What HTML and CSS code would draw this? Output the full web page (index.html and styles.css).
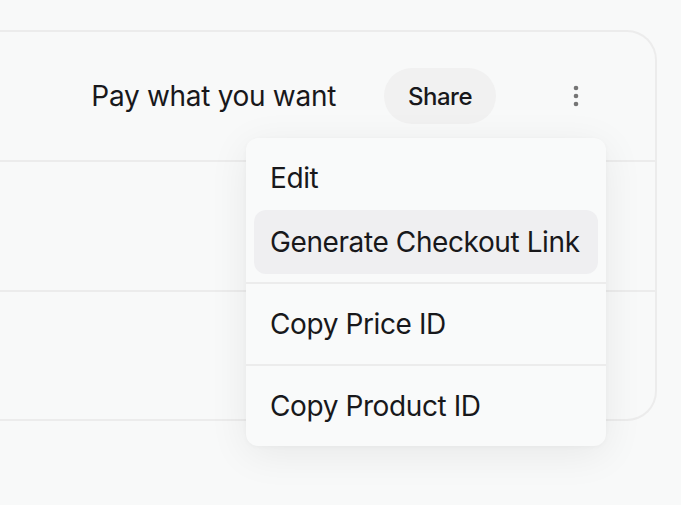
FILE: index.html
```html
<!DOCTYPE html>
<html lang="en">
<head>
<meta charset="utf-8">
<title>Prices</title>
<link rel="stylesheet" href="styles.css">
</head>
<body>
<div class="page">
  <div class="card">
    <div class="row row-main">
      <span class="price-label">Pay what you want</span>
      <button class="share-btn" type="button">Share</button>
      <button class="more-btn" type="button" aria-label="More">
        <svg width="6" height="22" viewBox="0 0 6 22" aria-hidden="true">
          <circle cx="3" cy="3" r="2.3" fill="#757575"/>
          <circle cx="3" cy="11" r="2.3" fill="#757575"/>
          <circle cx="3" cy="19" r="2.3" fill="#757575"/>
        </svg>
      </button>
    </div>
    <div class="row"></div>
    <div class="row"></div>
  </div>
  <div class="menu" role="menu">
    <div class="menu-item" role="menuitem">Edit</div>
    <div class="menu-item active" role="menuitem">Generate Checkout Link</div>
    <div class="menu-sep"></div>
    <div class="menu-item" role="menuitem">Copy Price ID</div>
    <div class="menu-sep"></div>
    <div class="menu-item" role="menuitem">Copy Product ID</div>
  </div>
</div>
</body>
</html>
```
FILE: styles.css
```css
html, body {
  margin: 0;
  padding: 0;
  background: #f8f9f9;
}
body {
  font-family: Inter, "Noto Sans", sans-serif;
  color: #18181b;
  width: 681px;
  height: 505px;
  overflow: hidden;
}
.page {
  position: relative;
  padding: 30px 24px 0 0;
}
.card {
  border: 2px solid #ececec;
  border-left: none;
  border-radius: 0 30px 30px 0;
  background: #f8f9f9;
}
.row {
  height: 128px;
  border-bottom: 2px solid #ececec;
}
.row:last-child {
  height: 127px;
  border-bottom: none;
}
.row-main {
  display: flex;
  align-items: center;
  justify-content: flex-end;
  padding-right: 59px;
}
.price-label {
  font-size: 28px;
  letter-spacing: -0.3px;
  margin-right: 48px;
  white-space: nowrap;
}
.share-btn {
  font-family: inherit;
  font-size: 24px;
  font-weight: 500;
  letter-spacing: -0.5px;
  color: #18181b;
  background: #f1f1f1;
  border: none;
  border-radius: 28px;
  height: 56px;
  padding: 0 24px;
  margin-right: 60px;
}
.more-btn {
  width: 40px;
  height: 40px;
  border: none;
  background: transparent;
  padding: 0;
  display: flex;
  align-items: center;
  justify-content: center;
}
.menu {
  position: absolute;
  left: 246px;
  top: 138px;
  width: 360px;
  box-sizing: border-box;
  padding: 8px;
  background: #f9fafa;
  border-radius: 12px;
  box-shadow: 0 8px 40px rgba(0, 0, 0, 0.07), 0 1px 4px rgba(0, 0, 0, 0.03);
}
.menu-item {
  height: 64px;
  display: flex;
  align-items: center;
  padding: 0 16px;
  font-size: 28px;
  letter-spacing: -0.4px;
  white-space: nowrap;
  border-radius: 12px;
}
.menu-item.active {
  background: #efeff1;
}
.menu-sep {
  height: 2px;
  background: #ececec;
  margin: 8px -8px;
}
```
